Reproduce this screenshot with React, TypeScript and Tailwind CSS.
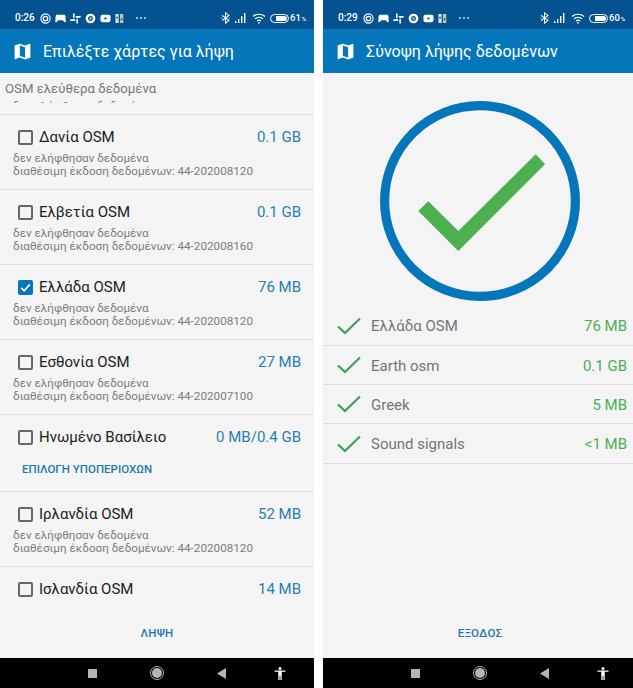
import React from 'react';

const mapPath =
  'M20.5 3l-.16.03L15 5.1 9 3 3.36 4.9c-.21.07-.36.25-.36.48V20.5c0 .28.22.5.5.5l.16-.03L9 18.9l6 2.1 5.64-1.9c.21-.07.36-.25.36-.48V3.5c0-.28-.22-.5-.5-.5zM15 19l-6-2.11V5l6 2.11V19z';

const NotifIcons = () => (
  <div className="flex items-center gap-[4px] ml-[5px]">
    {/* target */}
    <svg width="11" height="11" viewBox="0 0 12 12" fill="none" stroke="white">
      <circle cx="6" cy="6" r="5" strokeWidth="1.2" />
      <circle cx="6" cy="6" r="2.4" strokeWidth="1.4" />
    </svg>
    {/* gamepad */}
    <svg width="11" height="11" viewBox="0 0 12 12" fill="white">
      <path d="M2.5 2h7c1 0 1.8.7 1.9 1.7l.4 5.3c.1 1-1 1.5-1.7.8L8.3 8H3.7L2 9.8c-.7.7-1.8.2-1.7-.8l.4-5.3C.8 2.7 1.5 2 2.5 2z" />
    </svg>
    {/* slack */}
    <svg width="11" height="11" viewBox="0 0 12 12" stroke="white" strokeWidth="1.7" strokeLinecap="round">
      <path d="M4.2 1v4M7.8 7v4M1 7.8h4M7 4.2h4M4.2 7v.8M7.8 4.2V5" />
    </svg>
    {/* chrome */}
    <svg width="11" height="11" viewBox="0 0 12 12" fill="none" stroke="white">
      <circle cx="6" cy="6" r="4" strokeWidth="2.6" />
      <circle cx="6" cy="6" r="1.1" fill="white" strokeWidth="0" />
    </svg>
    {/* youtube */}
    <svg width="11" height="11" viewBox="0 0 12 12">
      <rect x="0.5" y="2" width="11" height="8" rx="2" fill="white" />
      <path d="M5 4.3v3.4L7.8 6z" fill="#04528f" />
    </svg>
    {/* book */}
    <svg width="9" height="11" viewBox="0 0 10 12">
      <rect x="0.5" y="1" width="3.6" height="10" fill="white" opacity="0.85" />
      <rect x="5.6" y="1" width="3.6" height="10" fill="#d9e2b0" opacity="0.85" />
      <rect x="1.5" y="4" width="1.6" height="2" fill="#04528f" />
      <rect x="6.6" y="6" width="1.6" height="2" fill="#04528f" />
    </svg>
    <div className="flex gap-[2px] ml-[8px]">
      <span className="w-[2px] h-[2px] rounded-full bg-white/80" />
      <span className="w-[2px] h-[2px] rounded-full bg-white/80" />
      <span className="w-[2px] h-[2px] rounded-full bg-white/80" />
    </div>
  </div>
);

const SysIcons = ({ level }: { level: string }) => (
  <div className="flex items-center text-white">
    {/* bluetooth */}
    <svg width="9" height="12" viewBox="0 0 10 14" fill="none" stroke="white" strokeWidth="1.2">
      <path d="M1 4l8 6-4 3V1l4 3-8 6" />
      <circle cx="0.8" cy="7" r="0.7" fill="white" stroke="none" />
      <circle cx="9.2" cy="7" r="0.7" fill="white" stroke="none" />
    </svg>
    {/* signal */}
    <svg className="ml-[5px]" width="11" height="10" viewBox="0 0 11 10" fill="white">
      <rect x="0" y="8" width="1.4" height="2" />
      <rect x="3" y="6" width="1.4" height="4" />
      <rect x="6" y="3" width="1.4" height="7" />
      <rect x="9" y="0" width="1.4" height="10" />
    </svg>
    {/* wifi */}
    <svg className="ml-[6px]" width="14" height="11" viewBox="0 0 14 11" fill="none" stroke="white" strokeWidth="1.2">
      <path d="M1 3.5c3.4-3 8.6-3 12 0M3 5.8c2.3-2 5.7-2 8 0M5 8c1.2-1 2.8-1 4 0" />
      <circle cx="7" cy="9.8" r="0.9" fill="white" stroke="none" />
    </svg>
    {/* battery */}
    <div className="ml-[4px] w-[19px] h-[9px] rounded-full border border-white p-[1px] flex justify-end">
      <div className="w-[11px] h-full rounded-r-full bg-white" />
    </div>
    <span className="ml-[1px] w-[21px] text-[9.5px] font-medium leading-none whitespace-nowrap">
      {level}
      <span className="text-[6px] ml-[1px]">%</span>
    </span>
  </div>
);

const Header = ({ time, level, title }: { time: string; level: string; title: string }) => (
  <>
    <div className="h-[29px] bg-[#04528f] flex items-center justify-between pl-[15px] pr-[3px] pt-[7px] shrink-0">
      <div className="flex items-center">
        <span className="text-white text-[10px] font-medium leading-none w-[20px]">{time}</span>
        <NotifIcons />
      </div>
      <SysIcons level={level} />
    </div>
    <div className="h-[44px] bg-[#0676bb] flex items-center pl-[12px] shrink-0">
      <svg width="21" height="21" viewBox="0 0 24 24" fill="white">
        <path d={mapPath} />
      </svg>
      <span className="ml-[10px] pt-[2px] text-white text-[16px] leading-none">{title}</span>
    </div>
  </>
);

const NavBar = () => (
  <div className="h-[30px] bg-black flex items-center shrink-0 pl-[88px]">
    <div className="w-[9px] h-[9px] bg-[#b5b5b5]" />
    <div className="ml-[53px] w-[14px] h-[14px] rounded-full border border-[#b5b5b5] flex items-center justify-center">
      <div className="w-[10px] h-[10px] rounded-full bg-[#b5b5b5]" />
    </div>
    <svg className="ml-[53px]" width="9" height="11" viewBox="0 0 9 11" fill="#b5b5b5">
      <path d="M9 0v11L0 5.5z" />
    </svg>
    <svg className="ml-[48px]" width="12" height="13" viewBox="0 0 11 13" fill="white">
      <circle cx="5.5" cy="1.6" r="1.5" />
      <path d="M0 3.4h11v1.4H7.2V13H5.9V9H5.1v4H3.8V4.8H0z" />
    </svg>
  </div>
);

interface MapRow {
  name: string;
  size: string;
  version?: string;
  checked?: boolean;
  sub?: boolean;
}

const rows: MapRow[] = [
  { name: 'Δανία OSM', size: '0.1 GB', version: '44-202008120' },
  { name: 'Ελβετία OSM', size: '0.1 GB', version: '44-202008160' },
  { name: 'Ελλάδα OSM', size: '76 MB', version: '44-202008120', checked: true },
  { name: 'Εσθονία OSM', size: '27 MB', version: '44-202007100' },
  { name: 'Ηνωμένο Βασίλειο', size: '0 MB/0.4 GB', sub: true },
  { name: 'Ιρλανδία OSM', size: '52 MB', version: '44-202008120' },
  { name: 'Ισλανδία OSM', size: '14 MB', version: '44-202008120' },
];

const Checkbox = ({ checked }: { checked?: boolean }) =>
  checked ? (
    <div className="w-[15px] h-[15px] rounded-[2px] bg-[#0676bb] flex items-center justify-center shrink-0">
      <svg width="11" height="11" viewBox="0 0 11 11" fill="none" stroke="white" strokeWidth="1.8">
        <path d="M1.2 5.8l3 3 5.6-6.4" />
      </svg>
    </div>
  ) : (
    <div className="w-[15px] h-[15px] rounded-[2px] border-2 border-[#666666] shrink-0" />
  );

const Row = ({ row }: { row: MapRow }) => (
  <div className={`${row.sub ? 'h-[77px]' : 'h-[75px]'} border-b border-[#dfdfdf] pt-[12px] shrink-0`}>
    <div className="h-[20px] flex items-center justify-between pl-[18px] pr-[13px]">
      <div className="flex items-center gap-[6px]">
        <Checkbox checked={row.checked} />
        <span className="pt-[1px] text-[15px] text-[#212121] leading-none">{row.name}</span>
      </div>
      <span className="pt-[1px] text-[15px] text-[#2a7fae] leading-none">{row.size}</span>
    </div>
    {row.sub ? (
      <div className="mt-[16px] pl-[22px] text-[11.5px] font-medium text-[#1f78ad] leading-[13px]">
        ΕΠΙΛΟΓΗ ΥΠΟΠΕΡΙΟΧΩΝ
      </div>
    ) : (
      <div className="mt-[5px] pl-[13px] text-[11.7px] text-[#7d7d7d] leading-[13px]">
        <div>δεν ελήφθησαν δεδομένα</div>
        <div>διαθέσιμη έκδοση δεδομένων: {row.version}</div>
      </div>
    )}
  </div>
);

const Footer = ({ label, shift }: { label: string; shift?: string }) => (
  <div className={`h-[53px] flex items-center justify-center pt-[4px] shrink-0 ${shift ?? ''}`}>
    <span className="text-[11.5px] font-medium text-[#1f78ad] leading-none tracking-[0.2px]">{label}</span>
  </div>
);

const summary = [
  { name: 'Ελλάδα OSM', size: '76 MB', height: 'h-[40px]' },
  { name: 'Earth osm', size: '0.1 GB', height: 'h-[39px]' },
  { name: 'Greek', size: '5 MB', height: 'h-[39px]' },
  { name: 'Sound signals', size: '<1 MB', height: 'h-[40px]' },
];

export default function App() {
  return (
    <div className="w-[633px] h-[688px] bg-white flex justify-between font-['Roboto',sans-serif]">
      {/* Map selection */}
      <div className="w-[314px] h-full flex flex-col bg-[#f4f4f4]">
        <Header time="0:26" level="61" title="Επιλέξτε χάρτες για λήψη" />
        <div className="flex-1 overflow-hidden min-h-0">
          <div className="h-[42px] border-b border-[#dfdfdf] pt-[8px] pl-[5px] text-[13.2px] text-[#777777] leading-[15px] overflow-hidden">
            <div className="h-[22px] overflow-hidden">
              <div>OSM ελεύθερα δεδομένα</div>
              <div className="mt-[3px] pl-[8px] text-[11.7px]">δεν ελήφθησαν δεδομένα</div>
            </div>
          </div>
          {rows.map((row) => (
            <Row key={row.name} row={row} />
          ))}
        </div>
        <Footer label="ΛΗΨΗ" />
        <NavBar />
      </div>

      {/* Download summary */}
      <div className="w-[310px] h-full flex flex-col bg-[#f4f4f4]">
        <Header time="0:29" level="60" title="Σύνοψη λήψης δεδομένων" />
        <div className="flex-1 min-h-0">
          <div className="pt-[28px] pl-[4px] flex justify-center">
            <svg width="200" height="200" viewBox="0 0 200 200" fill="none">
              <circle cx="100" cy="100" r="95.4" stroke="#0676bb" strokeWidth="9.2" />
              <polygon points="38.3,110 48.3,100.3 78.3,130 155.7,53.3 165,63.3 78.3,150" fill="#4caf50" />
            </svg>
          </div>
          <div className="mt-[5px]">
            {summary.map((item) => (
              <div
                key={item.name}
                className={`${item.height} border-b border-[#dfdfdf] flex items-center justify-between pl-[14px] pr-[6px]`}
              >
                <div className="flex items-center">
                  <svg width="24" height="18" viewBox="0 0 24 18" fill="none" stroke="#3f9f5a" strokeWidth="2.2">
                    <path d="M1 9.5l7 6.5L23 1.5" />
                  </svg>
                  <span className="ml-[10px] pt-[2px] text-[15px] text-[#757575] leading-none">{item.name}</span>
                </div>
                <span className="pt-[2px] text-[15px] text-[#4caf50] leading-none">{item.size}</span>
              </div>
            ))}
          </div>
        </div>
        <Footer label="ΕΞΟΔΟΣ" shift="pl-[4px]" />
        <NavBar />
      </div>
    </div>
  );
}
